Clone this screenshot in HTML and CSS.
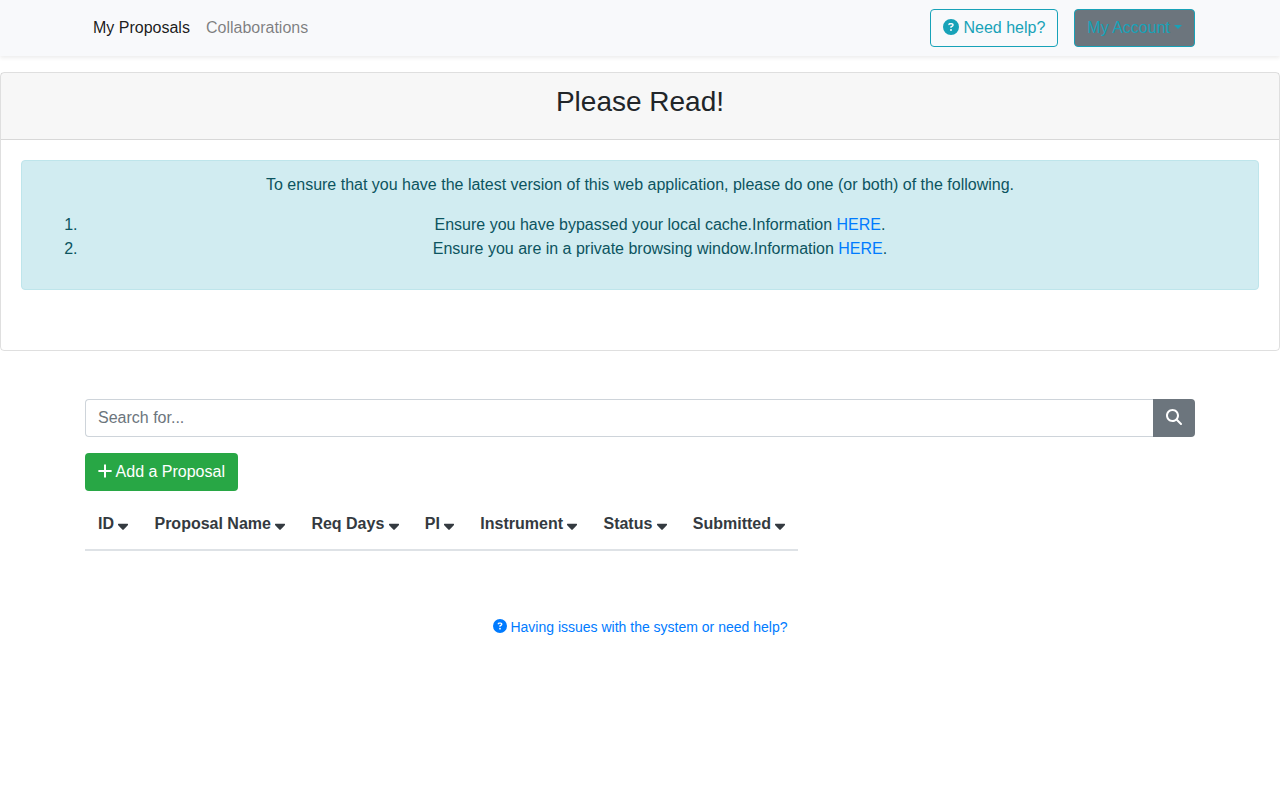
FILE: index.html
```html
<!DOCTYPE html>
<html lang="en">
<head>
<meta charset="utf-8">
<meta name="viewport" content="width=device-width, initial-scale=1">
<title>My Proposals</title>
<link rel="stylesheet" href="styles.css">
</head>
<body>
<svg class="sprite" aria-hidden="true">
  <symbol id="question" viewBox="0 0 512 512"><path d="M256 512A256 256 0 1 0 256 0a256 256 0 1 0 0 512zM169.800 165.300c7.900-22.300 29.100-37.300 52.800-37.300h58.300c34.900 0 63.100 28.300 63.100 63.100c0 22.600-12.100 43.500-31.700 54.800L280 264.400c-.2 13-10.900 23.600-24 23.600c-13.300 0-24-10.700-24-24V250.500c0-8.600 4.600-16.500 12.100-20.800l44.300-25.400c4.700-2.700 7.600-7.700 7.600-13.100c0-8.400-6.800-15.100-15.100-15.100H222.600c-3.400 0-6.400 2.100-7.500 5.300l-.4 1.200c-4.400 12.500-18.200 19-30.600 14.600s-19-18.200-14.600-30.600l.4-1.200zM224 352a32 32 0 1 1 64 0 32 32 0 1 1 -64 0z" fill-rule="evenodd"/></symbol>
  <symbol id="search" viewBox="0 0 512 512"><path d="M416 208c0 45.900-14.900 88.300-40 122.700L502.600 457.400c12.500 12.500 12.500 32.800 0 45.300s-32.800 12.500-45.300 0L330.700 376c-34.400 25.200-76.800 40-122.700 40C93.100 416 0 322.900 0 208S93.100 0 208 0S416 93.100 416 208zM208 352a144 144 0 1 0 0-288 144 144 0 1 0 0 288z" fill-rule="evenodd"/></symbol>
  <symbol id="plus" viewBox="0 0 448 512"><path d="M192 48H256V224H436V288H256V464H192V288H12V224H192Z"/></symbol>
  <symbol id="sort-down" viewBox="0 0 320 512"><path d="M12 280H308Q320 280 320 296V318L176 468Q160 480 144 468L0 318V296Q0 280 12 280Z"/></symbol>
</svg>

<nav class="navbar">
  <div class="container navbar-inner">
    <div class="nav-links">
      <a class="nav-link active" href="#">My Proposals</a>
      <a class="nav-link" href="#">Collaborations</a>
    </div>
    <div class="nav-actions">
      <button type="button" class="btn btn-help"><svg class="icon" aria-hidden="true"><use href="#question"/></svg> Need help?</button>
      <button type="button" class="btn btn-account">My Account<span class="caret"></span></button>
    </div>
  </div>
</nav>

<section class="card">
  <div class="card-header"><h3>Please Read!</h3></div>
  <div class="card-body">
    <div class="alert">
      <p>To ensure that you have the latest version of this web application, please do one (or both) of the following.</p>
      <ol>
        <li>Ensure you have bypassed your local cache.Information <a href="#">HERE</a>.</li>
        <li>Ensure you are in a private browsing window.Information <a href="#">HERE</a>.</li>
      </ol>
    </div>
  </div>
</section>

<main class="container">
  <form class="search">
    <input type="text" class="search-input" placeholder="Search for..." aria-label="Search for">
    <button type="button" class="btn btn-search" aria-label="Search"><svg class="icon" aria-hidden="true"><use href="#search"/></svg></button>
  </form>
  <button type="button" class="btn btn-add"><svg class="icon icon-plus" aria-hidden="true"><use href="#plus"/></svg> Add a Proposal</button>
  <table class="proposals">
    <thead>
      <tr>
        <th scope="col">ID <svg class="icon icon-sort" aria-hidden="true"><use href="#sort-down"/></svg></th>
        <th scope="col">Proposal Name <svg class="icon icon-sort" aria-hidden="true"><use href="#sort-down"/></svg></th>
        <th scope="col">Req Days <svg class="icon icon-sort" aria-hidden="true"><use href="#sort-down"/></svg></th>
        <th scope="col">PI <svg class="icon icon-sort" aria-hidden="true"><use href="#sort-down"/></svg></th>
        <th scope="col">Instrument <svg class="icon icon-sort" aria-hidden="true"><use href="#sort-down"/></svg></th>
        <th scope="col">Status <svg class="icon icon-sort" aria-hidden="true"><use href="#sort-down"/></svg></th>
        <th scope="col">Submitted <svg class="icon icon-sort" aria-hidden="true"><use href="#sort-down"/></svg></th>
      </tr>
    </thead>
  </table>
</main>

<footer class="footer">
  <a href="#"><svg class="icon icon-small" aria-hidden="true"><use href="#question"/></svg> Having issues with the system or need help?</a>
</footer>
</body>
</html>
```

FILE: styles.css
```css
* {
  box-sizing: border-box;
}

body {
  margin: 0;
  background: #fff;
  color: #212529;
  font: 16px/24px "Liberation Sans", Arial, sans-serif;
}

a {
  color: #007bff;
  text-decoration: none;
}

.sprite {
  display: none;
}

.icon {
  width: 16px;
  height: 16px;
  fill: currentColor;
  vertical-align: -2px;
}

.icon-plus {
  width: 14px;
}

.icon-sort {
  width: 10px;
}

.icon-small {
  width: 14px;
  height: 14px;
  vertical-align: -1px;
}

.container {
  width: 100%;
  max-width: 1140px;
  margin: 0 auto;
  padding: 0 15px;
}

.btn {
  padding: 6px 12px;
  border: 1px solid transparent;
  border-radius: 4px;
  font: inherit;
  white-space: nowrap;
  cursor: pointer;
}

.navbar {
  padding: 9px 0;
  background: #f8f9fb;
  box-shadow: 0 2px 4px rgba(0, 0, 0, 0.075);
}

.navbar-inner,
.nav-links,
.nav-actions {
  display: flex;
  align-items: center;
}

.navbar-inner {
  justify-content: space-between;
}

.nav-link {
  padding: 0 8px;
  color: rgba(0, 0, 0, 0.5);
}

.nav-link.active {
  color: rgba(0, 0, 0, 0.9);
}

.nav-actions {
  gap: 16px;
}

.btn-help,
.btn-account {
  border-color: #17a2b8;
  background: transparent;
  color: #17a2b8;
}

.btn-account {
  background: #6c757d;
}

.caret {
  display: inline-block;
  margin-left: 4px;
  border: 4px solid transparent;
  border-top-color: currentColor;
  border-bottom: 0;
  vertical-align: 4px;
}

.card {
  margin: 16px 0 48px;
  border: 1px solid rgba(0, 0, 0, 0.125);
  border-radius: 4px;
  text-align: center;
}

.card-header {
  padding: 12px 20px;
  border-bottom: 1px solid rgba(0, 0, 0, 0.125);
  background: rgba(0, 0, 0, 0.03);
}

.card-header h3 {
  margin: 0 0 8px;
  font-size: 28px;
  font-weight: 400;
  line-height: 34px;
}

.card-body {
  padding: 20px 20px 60px;
}

.alert {
  padding: 12px 20px;
  border: 1px solid #bee5eb;
  border-radius: 4px;
  background: #d1ecf1;
  color: #0c5460;
}

.alert p {
  margin: 0 0 16px;
}

.alert ol {
  margin: 0 0 16px;
  padding-left: 40px;
}

.search {
  display: flex;
  margin-bottom: 16px;
}

.search-input {
  flex: 1;
  min-width: 0;
  height: 38px;
  padding: 6px 12px;
  border: 1px solid #ced4da;
  border-right: 0;
  border-radius: 4px 0 0 4px;
  color: #495057;
  font: inherit;
}

.search-input::placeholder {
  color: #6c757d;
  opacity: 1;
}

.btn-search {
  border-radius: 0 4px 4px 0;
  background: #6c757d;
  color: #fff;
}

.btn-add {
  display: block;
  background: #28a745;
  color: #fff;
}

.proposals {
  margin-top: 8px;
  border-collapse: collapse;
  color: #343a40;
}

.proposals th {
  padding: 13px;
  border-bottom: 2px solid #dee2e6;
  font-weight: 700;
  text-align: left;
  white-space: nowrap;
}

.footer {
  margin-top: 64px;
  font-size: 14px;
  text-align: center;
}
```
